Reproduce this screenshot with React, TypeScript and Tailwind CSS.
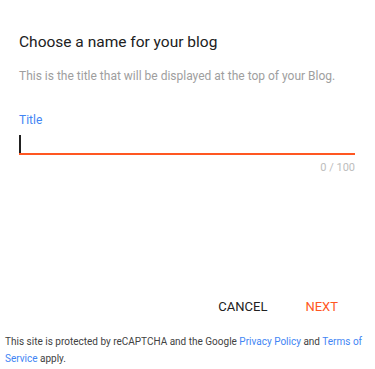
export default function App() {
  return (
    <div className="w-[375px] h-[369px] bg-white flex flex-col" style={{ fontFamily: "Roboto, 'Liberation Sans', sans-serif" }}>
      <div className="px-[19px] pt-[30px]">
        <h1 className="text-[15.5px] leading-[24px] text-[#212121] font-normal">Choose a name for your blog</h1>
        <p className="mt-[13px] text-[12px] leading-[18px] text-[#9e9e9e]">This is the title that will be displayed at the top of your Blog.</p>
        <div className="mt-[27px]">
          <label className="block text-[12px] leading-[16px] text-[#4285f4]">Title</label>
          <div className="mt-[5px] mr-[1px] h-[22px] border-b-2 border-[#ff5722] flex items-start pt-[2px]">
            <div className="w-[2px] h-[18px] bg-[#212121]" />
          </div>
          <div className="mt-[6px] mr-[1px] text-right text-[11px] leading-[14px] text-[#bdbdbd]">0 / 100</div>
        </div>
      </div>
      <div className="mt-auto flex justify-end items-center gap-[38px] pr-[37px] pb-[18px]">
        <button className="text-[13px] leading-[16px] font-normal text-[#212121]">CANCEL</button>
        <button className="text-[13px] leading-[16px] font-normal text-[#ff5722]">NEXT</button>
      </div>
      <p className="px-[5px] pb-[2px] text-[10px] leading-[17px] text-[#424242]">
        This site is protected by reCAPTCHA and the Google <span className="text-[#4285f4]">Privacy Policy</span> and <span className="text-[#4285f4]">Terms of Service</span> apply.
      </p>
    </div>
  );
}
